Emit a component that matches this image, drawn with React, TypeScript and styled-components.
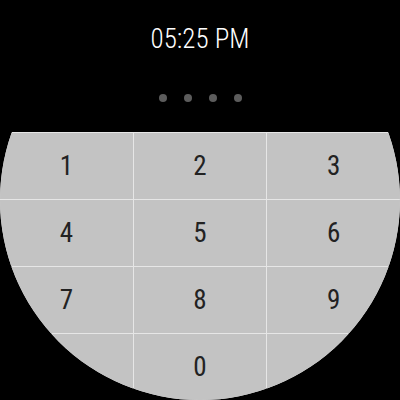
import React from 'react';
import { styled, createGlobalStyle } from 'styled-components';

const keys = ['1', '2', '3', '4', '5', '6', '7', '8', '9', '', '0', ''];

const App: React.FC = () => {
  return (
    <>
      <GlobalStyle />
      <Watch>
        <Header>
          <Time>05:25 PM</Time>
          <Dots>
            {[0, 1, 2, 3].map((i) => (
              <Dot key={i} />
            ))}
          </Dots>
        </Header>
        <Keypad>
          {keys.map((k, i) => (
            <Key key={i}>{k}</Key>
          ))}
        </Keypad>
      </Watch>
    </>
  );
};

export default App;

const GlobalStyle = createGlobalStyle`
  html, body {
    margin: 0;
    padding: 0;
    background: #000;
  }
  body {
    font-family: Roboto, "Noto Sans", sans-serif;
  }
`;

const Watch = styled.div`
  width: 400px;
  height: 400px;
  border-radius: 50%;
  overflow: hidden;
  background: #000;
  display: flex;
  flex-direction: column;
`;

const Header = styled.div`
  height: 132px;
  display: flex;
  flex-direction: column;
  align-items: center;
  padding-top: 26px;
  box-sizing: border-box;
`;

const Time = styled.div`
  color: #fff;
  font-size: 27px;
  line-height: 27px;
  font-weight: 300;
  font-stretch: 78%;
`;

const Dots = styled.div`
  display: flex;
  gap: 17px;
  margin-top: 41px;
`;

const Dot = styled.span`
  width: 8px;
  height: 8px;
  border-radius: 50%;
  background: #5c5c5c;
`;

const Keypad = styled.div`
  flex: 1;
  display: grid;
  grid-template-columns: repeat(3, 1fr);
  grid-template-rows: repeat(4, 66px);
  gap: 1px;
  padding-top: 1px;
  background: #e6e6e6;
`;

const Key = styled.div`
  background: #c3c3c3;
  color: #222;
  font-size: 27px;
  font-stretch: 85%;
  display: flex;
  align-items: center;
  justify-content: center;
`;
